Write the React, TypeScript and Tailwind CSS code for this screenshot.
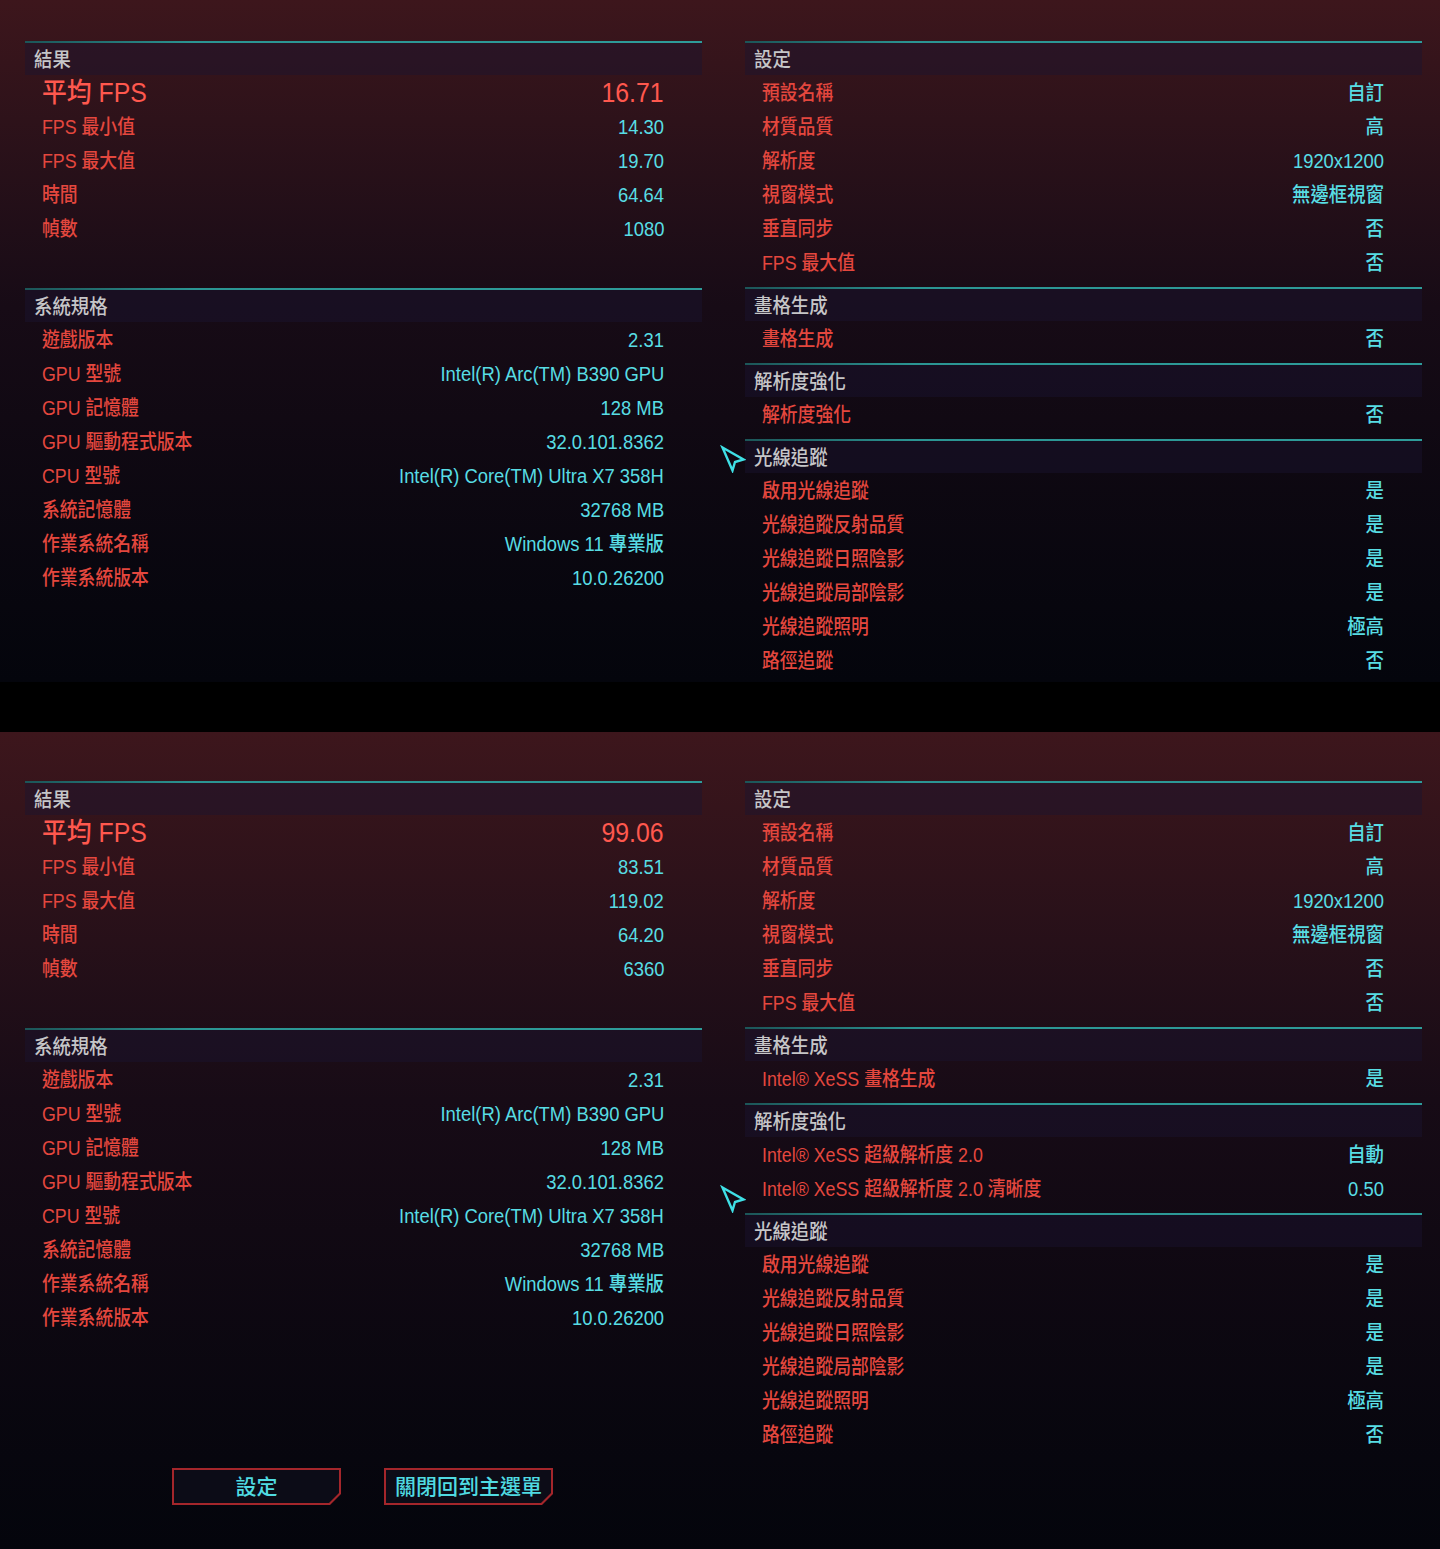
type Item = { label: string; value: string };
type Section = { title: string; rows: Item[] };

const RESULT_A: Item[] = [
  { label: "FPS 最小值", value: "14.30" },
  { label: "FPS 最大值", value: "19.70" },
  { label: "時間", value: "64.64" },
  { label: "幀數", value: "1080" },
];

const RESULT_B: Item[] = [
  { label: "FPS 最小值", value: "83.51" },
  { label: "FPS 最大值", value: "119.02" },
  { label: "時間", value: "64.20" },
  { label: "幀數", value: "6360" },
];

const SPECS: Item[] = [
  { label: "遊戲版本", value: "2.31" },
  { label: "GPU 型號", value: "Intel(R) Arc(TM) B390 GPU" },
  { label: "GPU 記憶體", value: "128 MB" },
  { label: "GPU 驅動程式版本", value: "32.0.101.8362" },
  { label: "CPU 型號", value: "Intel(R) Core(TM) Ultra X7 358H" },
  { label: "系統記憶體", value: "32768 MB" },
  { label: "作業系統名稱", value: "Windows 11 專業版" },
  { label: "作業系統版本", value: "10.0.26200" },
];

const SETTINGS: Item[] = [
  { label: "預設名稱", value: "自訂" },
  { label: "材質品質", value: "高" },
  { label: "解析度", value: "1920x1200" },
  { label: "視窗模式", value: "無邊框視窗" },
  { label: "垂直同步", value: "否" },
  { label: "FPS 最大值", value: "否" },
];

const RAYTRACING: Item[] = [
  { label: "啟用光線追蹤", value: "是" },
  { label: "光線追蹤反射品質", value: "是" },
  { label: "光線追蹤日照陰影", value: "是" },
  { label: "光線追蹤局部陰影", value: "是" },
  { label: "光線追蹤照明", value: "極高" },
  { label: "路徑追蹤", value: "否" },
];

const RIGHT_A: Section[] = [
  { title: "設定", rows: SETTINGS },
  { title: "畫格生成", rows: [{ label: "畫格生成", value: "否" }] },
  { title: "解析度強化", rows: [{ label: "解析度強化", value: "否" }] },
  { title: "光線追蹤", rows: RAYTRACING },
];

const RIGHT_B: Section[] = [
  { title: "設定", rows: SETTINGS },
  { title: "畫格生成", rows: [{ label: "Intel® XeSS 畫格生成", value: "是" }] },
  {
    title: "解析度強化",
    rows: [
      { label: "Intel® XeSS 超級解析度 2.0", value: "自動" },
      { label: "Intel® XeSS 超級解析度 2.0 清晰度", value: "0.50" },
    ],
  },
  { title: "光線追蹤", rows: RAYTRACING },
];

function Row({ label, value }: Item) {
  return (
    <div className="flex h-[34px] items-center justify-between whitespace-nowrap pl-[17px] pr-[38px] pt-[2px] text-[20px] font-medium leading-none">
      <span className="inline-block origin-left scale-x-[0.89] text-[#e4473e]">{label}</span>
      <span className="inline-block origin-right scale-x-[0.92] text-[#58dde4]">{value}</span>
    </div>
  );
}

function Header({ title }: { title: string }) {
  return (
    <>
      <div className="h-[2px] bg-linear-to-r from-[#1c5558] via-[#2b9593] via-25% to-[#2e9c9a]" />
      <div className="flex h-[32px] items-center bg-[#1a1530]/45 pl-[9px] pt-[1px]">
        <span className="inline-block origin-left scale-x-[0.92] text-[20px] font-medium leading-none text-[#c6c6c8]">
          {title}
        </span>
      </div>
    </>
  );
}

function Cursor() {
  return (
    <svg width="26" height="28" viewBox="0 0 26 28" className="absolute left-[720px]" fill="none">
      <path d="M2.5 2.5 L23.5 14.5 L15 17 L12.5 25.5 Z" stroke="#3fe0e6" strokeWidth="2.4" strokeLinejoin="miter" />
    </svg>
  );
}

function Panel({
  avg,
  results,
  right,
  height,
  top,
  cursorTop,
  buttons = false,
}: {
  avg: string;
  results: Item[];
  right: Section[];
  height: string;
  top: string;
  cursorTop: string;
  buttons?: boolean;
}) {
  return (
    <div className={`relative bg-linear-to-b from-[#3d161c] via-[#170b16] via-45% to-[#04050c] ${height} ${top}`}>
      <div className={`absolute ${cursorTop}`}>
        <Cursor />
      </div>
      <div className="grid grid-cols-[677px_677px] gap-x-[43px] pl-[25px]">
        {/* Left column */}
        <div>
          <div className="pb-[43px]">
            <Header title="結果" />
            <div className="flex h-[34px] items-center justify-between pl-[17px] pr-[38px] pt-[2px] text-[27px] leading-none text-[#ff584e]">
              <span className="inline-block origin-left scale-x-[0.92] font-medium">平均 FPS</span>
              <span className="inline-block origin-right scale-x-[0.92]">{avg}</span>
            </div>
            {results.map((r) => (
              <Row key={r.label} {...r} />
            ))}
          </div>
          <div>
            <Header title="系統規格" />
            {SPECS.map((r) => (
              <Row key={r.label} {...r} />
            ))}
          </div>
          {buttons && (
            <div className="mt-[134px] flex justify-center gap-[43px] pr-[2px]">
              <Button label="設定" />
              <Button label="關閉回到主選單" />
            </div>
          )}
        </div>

        {/* Right column */}
        <div>
          {right.map((s) => (
            <div key={s.title} className="pb-[8px]">
              <Header title={s.title} />
              {s.rows.map((r) => (
                <Row key={r.label} {...r} />
              ))}
            </div>
          ))}
        </div>
      </div>
    </div>
  );
}

function Button({ label }: { label: string }) {
  return (
    <div className="h-[37px] w-[169px] bg-[#a4262b] p-[2px] [clip-path:polygon(0_0,100%_0,100%_calc(100%_-_11px),calc(100%_-_11px)_100%,0_100%)]">
      <div className="flex h-full w-full items-center justify-center bg-[#0c0c17] [clip-path:polygon(0_0,100%_0,100%_calc(100%_-_10px),calc(100%_-_10px)_100%,0_100%)]">
        <span className="whitespace-nowrap text-[21px] font-medium leading-none text-[#50dbe2]">{label}</span>
      </div>
    </div>
  );
}

export default function App() {
  return (
    <div className="h-[1549px] w-[1440px] overflow-hidden bg-black font-['Liberation_Sans','Noto_Sans_CJK_TC',sans-serif]">
      <Panel
        avg="16.71"
        results={RESULT_A}
        right={RIGHT_A}
        height="h-[682px]"
        top="pt-[41px]"
        cursorTop="top-[445px]"
      />
      <div className="h-[50px] bg-black" />
      <Panel
        avg="99.06"
        results={RESULT_B}
        right={RIGHT_B}
        height="h-[817px]"
        top="pt-[49px]"
        cursorTop="top-[453px]"
        buttons
      />
    </div>
  );
}
